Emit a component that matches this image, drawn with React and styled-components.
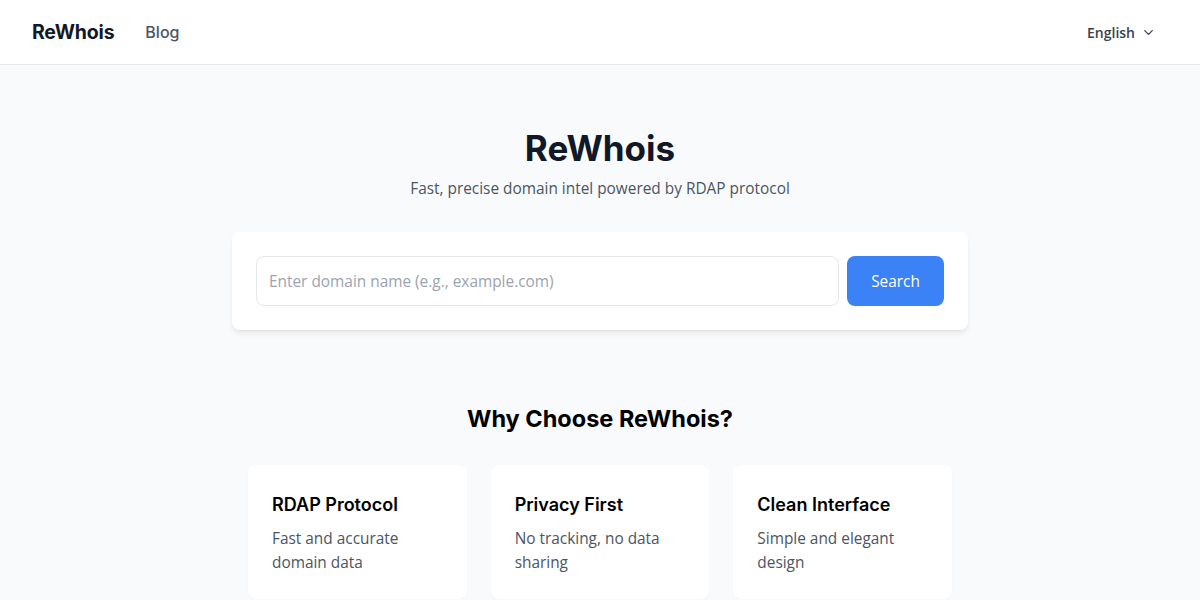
import styled, { createGlobalStyle } from 'styled-components';
import { ChevronDown } from 'lucide-react';

const GlobalStyle = createGlobalStyle`
  html, body {
    margin: 0;
    padding: 0;
    background: #f9fafb;
  }
  * { box-sizing: border-box; }
  body {
    font-family: "Open Sans", "Noto Sans", sans-serif;
    color: #111827;
  }
`;

const heading = `"Inter", "Liberation Sans", sans-serif`;

const Header = styled.header`
  height: 65px;
  background: #ffffff;
  border-bottom: 1px solid #e5e7eb;
  display: flex;
  align-items: center;
  justify-content: space-between;
  padding: 0 32px;
`;

const Nav = styled.div`
  display: flex;
  align-items: center;
  gap: 31px;
`;

const Logo = styled.a`
  font-family: ${heading};
  font-size: 19.5px;
  font-weight: 700;
  color: #111827;
  letter-spacing: -0.2px;
`;

const NavLink = styled.a`
  font-family: ${heading};
  font-size: 16px;
  font-weight: 500;
  color: #4b5563;
`;

const LangButton = styled.button`
  display: flex;
  align-items: center;
  gap: 6px;
  background: none;
  border: none;
  padding: 0 12px 0 0;
  font-family: "Open Sans", sans-serif;
  font-size: 14px;
  font-weight: 600;
  color: #374151;
`;

const Main = styled.main`
  max-width: 768px;
  margin: 0 auto;
  padding: 63px 16px 0;
  display: flex;
  flex-direction: column;
  align-items: center;
`;

const Title = styled.h1`
  margin: 0;
  font-family: ${heading};
  font-size: 35px;
  line-height: 40px;
  font-weight: 700;
  color: #111827;
`;

const Subtitle = styled.p`
  margin: 9px 0 31px;
  font-size: 15.4px;
  line-height: 24px;
  color: #4b5563;
`;

const SearchCard = styled.form`
  width: 100%;
  background: #ffffff;
  border-radius: 8px;
  padding: 24px;
  display: flex;
  gap: 8px;
  box-shadow: 0 4px 6px -1px rgba(0, 0, 0, 0.08), 0 2px 4px -2px rgba(0, 0, 0, 0.06);
`;

const Input = styled.input`
  flex: 1;
  height: 50px;
  border: 1px solid #e5e7eb;
  border-radius: 8px;
  padding: 0 12px;
  font-family: "Open Sans", sans-serif;
  font-size: 15.4px;
  color: #111827;
  &::placeholder { color: #9ca3af; }
  outline: none;
`;

const Button = styled.button`
  width: 97px;
  height: 50px;
  background: #3b82f6;
  color: #ffffff;
  border: none;
  border-radius: 8px;
  font-family: "Open Sans", sans-serif;
  font-size: 15.4px;
`;

const SectionTitle = styled.h2`
  margin: 73px 0 30px;
  font-family: ${heading};
  font-size: 23.5px;
  line-height: 32px;
  font-weight: 700;
  color: #000000;
`;

const Grid = styled.div`
  width: 704px;
  display: grid;
  grid-template-columns: repeat(3, 1fr);
  gap: 24px;
`;

const Feature = styled.div`
  background: #ffffff;
  border-radius: 8px;
  padding: 26px 24px 24px;
  box-shadow: 0 1px 2px rgba(0, 0, 0, 0.04);
`;

const FeatureTitle = styled.h3`
  margin: 0;
  font-family: ${heading};
  font-size: 18px;
  line-height: 28px;
  font-weight: 600;
  color: #000000;
`;

const FeatureText = styled.p`
  margin: 8px 0 0;
  font-size: 15.4px;
  line-height: 24px;
  color: #4b5563;
`;

const features = [
  { title: 'RDAP Protocol', text: 'Fast and accurate domain data' },
  { title: 'Privacy First', text: 'No tracking, no data sharing' },
  { title: 'Clean Interface', text: 'Simple and elegant design' },
];

export default function App() {
  return (
    <>
      <GlobalStyle />
      <Header>
        <Nav>
          <Logo>ReWhois</Logo>
          <NavLink>Blog</NavLink>
        </Nav>
        <LangButton>
          English <ChevronDown size={15} strokeWidth={2} />
        </LangButton>
      </Header>
      <Main>
        <Title>ReWhois</Title>
        <Subtitle>Fast, precise domain intel powered by RDAP protocol</Subtitle>
        <SearchCard onSubmit={(e) => e.preventDefault()}>
          <Input placeholder="Enter domain name (e.g., example.com)" />
          <Button type="submit">Search</Button>
        </SearchCard>
        <SectionTitle>Why Choose ReWhois?</SectionTitle>
        <Grid>
          {features.map((f) => (
            <Feature key={f.title}>
              <FeatureTitle>{f.title}</FeatureTitle>
              <FeatureText>{f.text}</FeatureText>
            </Feature>
          ))}
        </Grid>
      </Main>
    </>
  );
}
